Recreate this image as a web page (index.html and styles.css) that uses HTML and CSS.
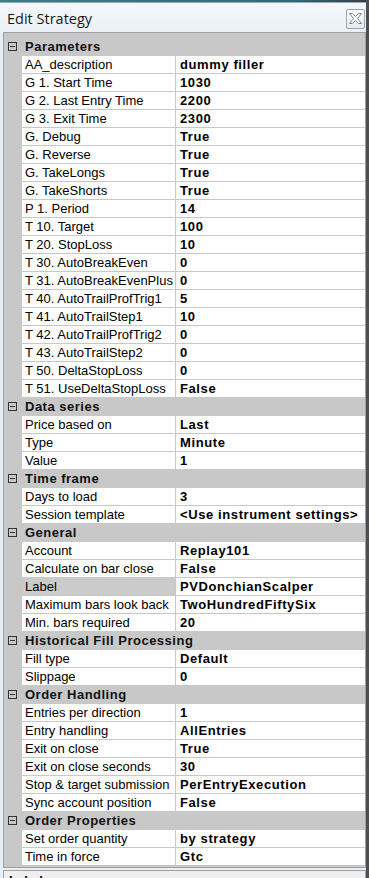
FILE: index.html
```html
<!DOCTYPE html>
<html lang="en">
<head>
  <meta charset="UTF-8">
  <meta name="viewport" content="width=device-width, initial-scale=1.0">
  <title>Edit Strategy</title>
  <link rel="stylesheet" href="styles.css">
</head>
<body>
  <div class="top-line"></div>

  <!-- Title bar -->
  <div class="titlebar">
    <span class="title">Edit Strategy</span>
    <span class="close-btn">
      <svg width="15" height="15" viewBox="0 0 15 15">
        <polygon points="1.5,2.5 4.5,2.5 7.5,5.5 10.5,2.5 13.5,2.5 9.5,7.5 13.5,12.5 10.5,12.5 7.5,9.5 4.5,12.5 1.5,12.5 5.5,7.5" fill="#fff" stroke="#7d8590" stroke-width="1"/>
      </svg>
    </span>
  </div>

  <!-- Property grid -->
  <div class="grid">
    <div class="cat"><span class="toggle"></span><span class="cat-name">Parameters</span></div>
    <div class="row"><span class="gutter"></span><span class="name">AA_description</span><span class="value">dummy filler</span></div>
    <div class="row"><span class="gutter"></span><span class="name">G 1. Start Time</span><span class="value">1030</span></div>
    <div class="row"><span class="gutter"></span><span class="name">G 2. Last Entry Time</span><span class="value">2200</span></div>
    <div class="row"><span class="gutter"></span><span class="name">G 3. Exit Time</span><span class="value">2300</span></div>
    <div class="row"><span class="gutter"></span><span class="name">G. Debug</span><span class="value">True</span></div>
    <div class="row"><span class="gutter"></span><span class="name">G. Reverse</span><span class="value">True</span></div>
    <div class="row"><span class="gutter"></span><span class="name">G. TakeLongs</span><span class="value">True</span></div>
    <div class="row"><span class="gutter"></span><span class="name">G. TakeShorts</span><span class="value">True</span></div>
    <div class="row"><span class="gutter"></span><span class="name">P 1. Period</span><span class="value">14</span></div>
    <div class="row"><span class="gutter"></span><span class="name">T 10. Target</span><span class="value">100</span></div>
    <div class="row"><span class="gutter"></span><span class="name">T 20. StopLoss</span><span class="value">10</span></div>
    <div class="row"><span class="gutter"></span><span class="name">T 30. AutoBreakEven</span><span class="value">0</span></div>
    <div class="row"><span class="gutter"></span><span class="name">T 31. AutoBreakEvenPlus</span><span class="value">0</span></div>
    <div class="row"><span class="gutter"></span><span class="name">T 40. AutoTrailProfTrig1</span><span class="value">5</span></div>
    <div class="row"><span class="gutter"></span><span class="name">T 41. AutoTrailStep1</span><span class="value">10</span></div>
    <div class="row"><span class="gutter"></span><span class="name">T 42. AutoTrailProfTrig2</span><span class="value">0</span></div>
    <div class="row"><span class="gutter"></span><span class="name">T 43. AutoTrailStep2</span><span class="value">0</span></div>
    <div class="row"><span class="gutter"></span><span class="name">T 50. DeltaStopLoss</span><span class="value">0</span></div>
    <div class="row"><span class="gutter"></span><span class="name">T 51. UseDeltaStopLoss</span><span class="value">False</span></div>

    <div class="cat"><span class="toggle"></span><span class="cat-name">Data series</span></div>
    <div class="row"><span class="gutter"></span><span class="name">Price based on</span><span class="value">Last</span></div>
    <div class="row"><span class="gutter"></span><span class="name">Type</span><span class="value">Minute</span></div>
    <div class="row"><span class="gutter"></span><span class="name">Value</span><span class="value">1</span></div>

    <div class="cat"><span class="toggle"></span><span class="cat-name">Time frame</span></div>
    <div class="row"><span class="gutter"></span><span class="name">Days to load</span><span class="value">3</span></div>
    <div class="row"><span class="gutter"></span><span class="name">Session template</span><span class="value">&lt;Use instrument settings&gt;</span></div>

    <div class="cat"><span class="toggle"></span><span class="cat-name">General</span></div>
    <div class="row"><span class="gutter"></span><span class="name">Account</span><span class="value">Replay101</span></div>
    <div class="row"><span class="gutter"></span><span class="name">Calculate on bar close</span><span class="value">False</span></div>
    <div class="row selected"><span class="gutter"></span><span class="name">Label</span><span class="value">PVDonchianScalper</span></div>
    <div class="row"><span class="gutter"></span><span class="name">Maximum bars look back</span><span class="value">TwoHundredFiftySix</span></div>
    <div class="row"><span class="gutter"></span><span class="name">Min. bars required</span><span class="value">20</span></div>

    <div class="cat"><span class="toggle"></span><span class="cat-name">Historical Fill Processing</span></div>
    <div class="row"><span class="gutter"></span><span class="name">Fill type</span><span class="value">Default</span></div>
    <div class="row"><span class="gutter"></span><span class="name">Slippage</span><span class="value">0</span></div>

    <div class="cat"><span class="toggle"></span><span class="cat-name">Order Handling</span></div>
    <div class="row"><span class="gutter"></span><span class="name">Entries per direction</span><span class="value">1</span></div>
    <div class="row"><span class="gutter"></span><span class="name">Entry handling</span><span class="value">AllEntries</span></div>
    <div class="row"><span class="gutter"></span><span class="name">Exit on close</span><span class="value">True</span></div>
    <div class="row"><span class="gutter"></span><span class="name">Exit on close seconds</span><span class="value">30</span></div>
    <div class="row"><span class="gutter"></span><span class="name">Stop &amp; target submission</span><span class="value">PerEntryExecution</span></div>
    <div class="row"><span class="gutter"></span><span class="name">Sync account position</span><span class="value">False</span></div>

    <div class="cat"><span class="toggle"></span><span class="cat-name">Order Properties</span></div>
    <div class="row"><span class="gutter"></span><span class="name">Set order quantity</span><span class="value">by strategy</span></div>
    <div class="row"><span class="gutter"></span><span class="name">Time in force</span><span class="value">Gtc</span></div>
  </div>

  <!-- Description pane -->
  <div class="help">
    <span class="help-title">Label</span>
  </div>
</body>
</html>
```

FILE: styles.css
```css
:root {
  --frame: #e9eff6;
  --grid-line: #c8c8c8;
  --cat-bg: #c8c8c8;
  --border: #a0a0a0;
}

html,
body {
  height: 878px;
}

body {
  margin: 0;
  overflow: hidden;
  background: var(--frame);
  border-right: 3px solid #4b4f54;
  font-family: "Liberation Sans", Arial, sans-serif;
  font-size: 13px;
  color: #000;
}

.top-line {
  height: 2px;
  background: linear-gradient(90deg, #3f7d8d 0%, #2f6a79 80%, #3a3f44 100%);
  border-bottom: 1px solid #9aa8b2;
}

/* Title bar */
.titlebar {
  height: 29px;
  display: flex;
  align-items: center;
  justify-content: space-between;
  padding: 0 1px 0 7px;
  background: linear-gradient(180deg, #f4f7fb 0%, #eaf0f6 100%);
}

.title {
  font-family: "Open Sans", "Noto Sans", sans-serif;
  font-size: 14.5px;
  color: #1b1b1b;
  margin-top: 1px;
}

.close-btn {
  width: 17px;
  height: 18px;
  margin-top: 2px;
  border: 1px solid #9ba3ab;
  border-radius: 2px;
  background: linear-gradient(180deg, #fbfcfd 0%, #e6ebf0 100%);
  display: flex;
  align-items: center;
  justify-content: center;
}

/* Property grid */
.grid {
  margin: 0 0 0 3px;
  border: 1px solid var(--border);
  background: var(--cat-bg);
  padding: 5px 0 1px 0;
}

.cat,
.row {
  display: grid;
  grid-template-columns: 18px 154px 1fr;
  height: 18px;
  line-height: 17px;
}

.cat {
  grid-template-columns: 18px 1fr;
  background: var(--cat-bg);
  font-weight: bold;
  letter-spacing: 0.5px;
}

.cat-name {
  padding-left: 3px;
  color: #111;
}

.toggle {
  position: relative;
}

.toggle::before {
  content: "";
  position: absolute;
  left: 4px;
  top: 4px;
  width: 7px;
  height: 7px;
  border: 1px solid #333;
}

.toggle::after {
  content: "";
  position: absolute;
  left: 6px;
  top: 8px;
  width: 5px;
  height: 1px;
  background: #333;
}

.gutter {
  background: var(--cat-bg);
}

.name,
.value {
  background: #fff;
  border-bottom: 1px solid var(--grid-line);
  white-space: nowrap;
  overflow: hidden;
}

.name {
  padding-left: 3px;
  border-right: 1px solid var(--grid-line);
}

.value {
  padding-left: 4px;
  font-weight: bold;
  letter-spacing: 0.6px;
}

.row.selected .name {
  background: #cbcbcb;
}

/* Description pane */
.help {
  margin: 2px 0 0 3px;
  border: 1px solid var(--border);
  background: #efefef;
  height: 40px;
  padding: 2px 0 0 5px;
}

.help-title {
  font-weight: bold;
}
```
